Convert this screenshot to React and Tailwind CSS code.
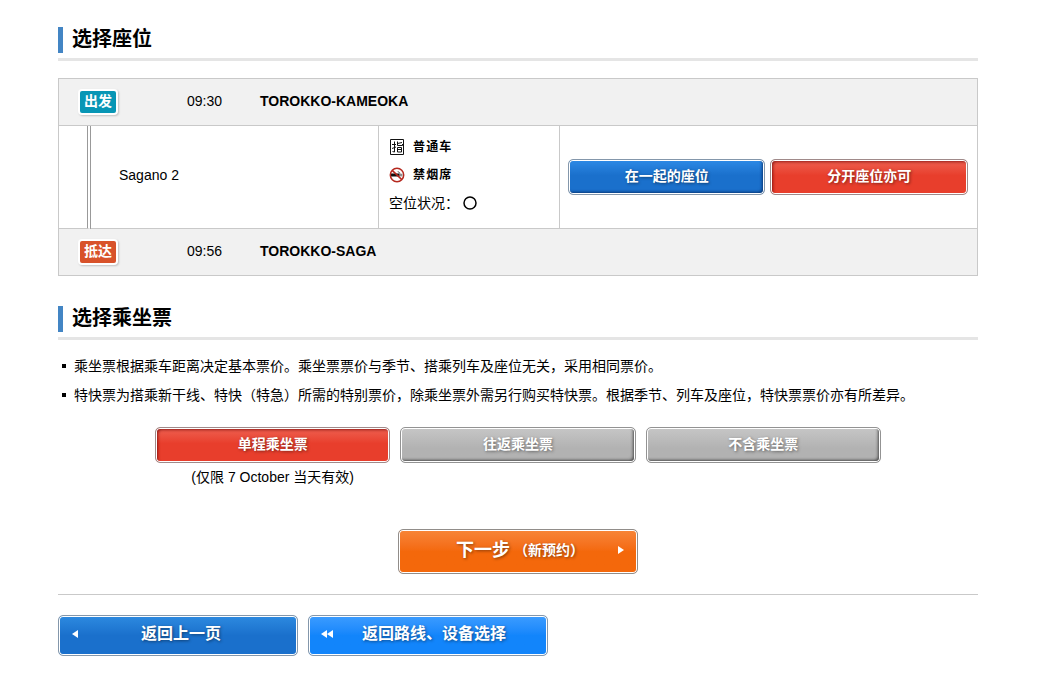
import { useState } from 'react';
import clsx from 'clsx';

const tickets = [
  { id: 'oneway', label: '单程乘坐票' },
  { id: 'round', label: '往返乘坐票' },
  { id: 'none', label: '不含乘坐票' },
];

const notes = [
  '乘坐票根据乘车距离决定基本票价。乘坐票票价与季节、搭乘列车及座位无关，采用相同票价。',
  '特快票为搭乘新干线、特快（特急）所需的特别票价，除乘坐票外需另行购买特快票。根据季节、列车及座位，特快票票价亦有所差异。',
];

const buttonBase =
  'rounded-[5px] border pb-[3px] font-bold text-white cursor-pointer [text-shadow:1px_1px_3px_rgba(0,0,0,0.45)]';

const tones = {
  red: 'border-[#a08a8a] bg-linear-to-b from-[#ee6050] to-[#e83e2c] to-45% shadow-[inset_0_0_0_1px_#fff,inset_2px_2px_3px_rgba(110,0,0,0.7)]',
  blue: 'border-[#8497ab] bg-linear-to-b from-[#2d8ae6] to-[#1a70cc] to-45% shadow-[inset_0_0_0_1px_#fff,inset_-2px_-2px_3px_rgba(0,30,80,0.7)]',
  gray: 'border-[#939393] bg-linear-to-b from-[#c6c6c6] to-[#b2b2b2] to-60% shadow-[inset_0_0_0_1px_#fff,inset_-2px_-2px_3px_rgba(50,50,50,0.8)]',
  orange: 'border-[#918d8a] bg-linear-to-b from-[#f78536] to-[#f4680b] to-50% shadow-[inset_0_0_0_1px_#fff]',
  navy: 'border-[#8497ab] bg-linear-to-b from-[#2d8ae0] to-[#1a70cc] to-50% shadow-[inset_0_0_0_1px_#fff]',
  sky: 'border-[#8497ab] bg-linear-to-b from-[#3b9cff] to-[#1285fb] to-50% shadow-[inset_0_0_0_1px_#fff]',
};

function Heading({ children }) {
  return (
    <div className="border-b-3 border-[#e5e5e5] pb-[5px]">
      <h2 className="border-l-5 border-[#4385c4] pb-0.5 pl-[9px] text-xl leading-6 font-bold">{children}</h2>
    </div>
  );
}

function StopRow({ badge, badgeColor, time, station }) {
  return (
    <tr>
      <td colSpan={4} className="h-[47px] border-b border-[#c9c9c9] bg-[#f1f1f1] p-0 align-middle">
        <div className="flex items-center pl-[19px]">
          <span
            className={clsx(
              'w-10 rounded-[4px] border-2 border-white pb-0.5 text-center text-sm leading-5 font-bold text-white shadow-[1px_1px_2px_rgba(0,0,0,0.2)]',
              badgeColor
            )}
          >
            {badge}
          </span>
          <time className="ml-[69px] w-[73px] pb-0.5">{time}</time>
          <strong className="pb-0.5">{station}</strong>
        </div>
      </td>
    </tr>
  );
}

function ReservedIcon() {
  return (
    <svg width="16" height="16" viewBox="0 0 16 16" fill="none" stroke="#111" aria-hidden="true">
      <path d="M1.5.5h13v15h-13z" />
      <path d="M3 5.5h4M5.5 2.5v10.5l-2-.5M3 9.5l4-1.5M8.5 2.5v4h5V5M13 3.5l-4.5 1M8.5 8.5h4v4.5h-4zM8.5 10.5h4" />
    </svg>
  );
}

function NoSmokingIcon() {
  return (
    <svg width="16" height="16" viewBox="0 0 16 16" fill="none" aria-hidden="true">
      <path d="M1.5 6.5h9v3h-9z" fill="#111" />
      <path d="M11.2 6.8v2.6M12.8 6.8v2.6M11 6.5c0-1.5-2-.7-2-2.2" stroke="#333" strokeWidth=".8" />
      <circle cx="8" cy="8" r="6.7" stroke="#b5291f" strokeWidth="1.5" />
      <path d="m3.2 3.4 9.6 9.2" stroke="#b5291f" strokeWidth="1.5" />
    </svg>
  );
}

export default function App() {
  const [together, setTogether] = useState(true);
  const [ticket, setTicket] = useState('oneway');

  return (
    <main className="bg-white pt-[27px] pr-[79px] pb-[22px] pl-[58px] font-['Liberation_Sans','Noto_Sans_CJK_SC',sans-serif] text-sm leading-5 text-black">
      <Heading>选择座位</Heading>

      <table className="mt-[17px] w-full table-fixed border-separate border-spacing-0 border border-b-0 border-[#c9c9c9]">
        <colgroup>
          <col className="w-8" />
          <col />
          <col className="w-[181px]" />
          <col className="w-[417px]" />
        </colgroup>
        <tbody>
          <StopRow badge="出发" badgeColor="bg-[#0896b5]" time="09:30" station="TOROKKO-KAMEOKA" />
          <tr>
            <td className="border-r-4 border-b border-r-[#999] border-b-[#c9c9c9] p-0 [border-right-style:double]" />
            <td className="border-r border-b border-[#c9c9c9] pt-0 pr-0 pb-1 pl-7">Sagano 2</td>
            <td className="h-[103px] border-r border-b border-[#c9c9c9] pt-0 pr-0 pb-1 pl-[10px] align-middle">
              <div className="flex flex-col gap-2">
                <div className="flex items-center gap-2 text-xs leading-5 font-bold tracking-widest">
                  <ReservedIcon />
                  普通车
                </div>
                <div className="flex items-center gap-2 text-xs leading-5 font-bold tracking-widest">
                  <NoSmokingIcon />
                  禁烟席
                </div>
                <div className="flex items-center gap-1">
                  空位状况：
                  <svg width="14" height="14" viewBox="0 0 14 14" role="img" aria-label="○">
                    <circle cx="7" cy="7" r="6" fill="none" stroke="#000" strokeWidth="1.5" />
                  </svg>
                </div>
              </div>
            </td>
            <td className="border-b border-[#c9c9c9] py-0 pr-[9px] pl-2">
              <div className="flex gap-[5px]">
                <button
                  type="button"
                  aria-pressed={!together}
                  onClick={() => setTogether(false)}
                  className={clsx(buttonBase, 'h-9 flex-1 text-sm', together ? tones.blue : tones.red)}
                >
                  在一起的座位
                </button>
                <button
                  type="button"
                  aria-pressed={together}
                  onClick={() => setTogether(true)}
                  className={clsx(buttonBase, 'h-9 flex-1 text-sm', together ? tones.red : tones.blue)}
                >
                  分开座位亦可
                </button>
              </div>
            </td>
          </tr>
          <StopRow badge="抵达" badgeColor="bg-[#d8522a]" time="09:56" station="TOROKKO-SAGA" />
        </tbody>
      </table>

      <section className="mt-[30px]">
        <Heading>选择乘坐票</Heading>
        <ul className="mt-4 space-y-[9px]">
          {notes.map((note) => (
            <li key={note} className="flex items-center gap-2 pl-1">
              <span className="size-1 shrink-0 bg-black" />
              {note}
            </li>
          ))}
        </ul>
        <div className="mx-auto mt-[22px] flex max-w-[726px] gap-[10px]">
          {tickets.map(({ id, label }) => (
            <div key={id} className="flex-1 text-center">
              <button
                type="button"
                aria-pressed={ticket === id}
                onClick={() => setTicket(id)}
                className={clsx(buttonBase, 'h-9 w-full text-sm', ticket === id ? tones.red : tones.gray)}
              >
                {label}
              </button>
              {id === 'oneway' && <p className="mt-1">(仅限 7 October 当天有效)</p>}
            </div>
          ))}
        </div>
      </section>

      <div className="mt-[42px] flex justify-center border-b border-[#c9c9c9] pb-5">
        <button
          type="button"
          className={clsx(buttonBase, tones.orange, 'flex h-[45px] w-60 items-center pr-[13px] pl-[57px]')}
        >
          <span className="text-lg">下一步</span>
          <span className="ml-1 text-sm">（新预约）</span>
          <svg className="ml-auto" width="6" height="8" viewBox="0 0 6 8" fill="#fff" aria-hidden="true">
            <path d="M0 0l6 4-6 4z" />
          </svg>
        </button>
      </div>

      <div className="mt-5 flex gap-[10px]">
        <button
          type="button"
          className={clsx(buttonBase, tones.navy, 'flex h-[41px] w-60 items-center px-[13px] text-base')}
        >
          <svg width="6" height="8" viewBox="0 0 6 8" fill="#fff" aria-hidden="true">
            <path d="M6 0L0 4l6 4z" />
          </svg>
          <span className="flex-1">返回上一页</span>
        </button>
        <button
          type="button"
          className={clsx(buttonBase, tones.sky, 'flex h-[41px] w-60 items-center px-3 text-base')}
        >
          <svg width="12" height="8" viewBox="0 0 12 8" fill="#fff" aria-hidden="true">
            <path d="M6 0L0 4l6 4zM12 0L6 4l6 4z" />
          </svg>
          <span className="flex-1">返回路线、设备选择</span>
        </button>
      </div>
    </main>
  );
}
